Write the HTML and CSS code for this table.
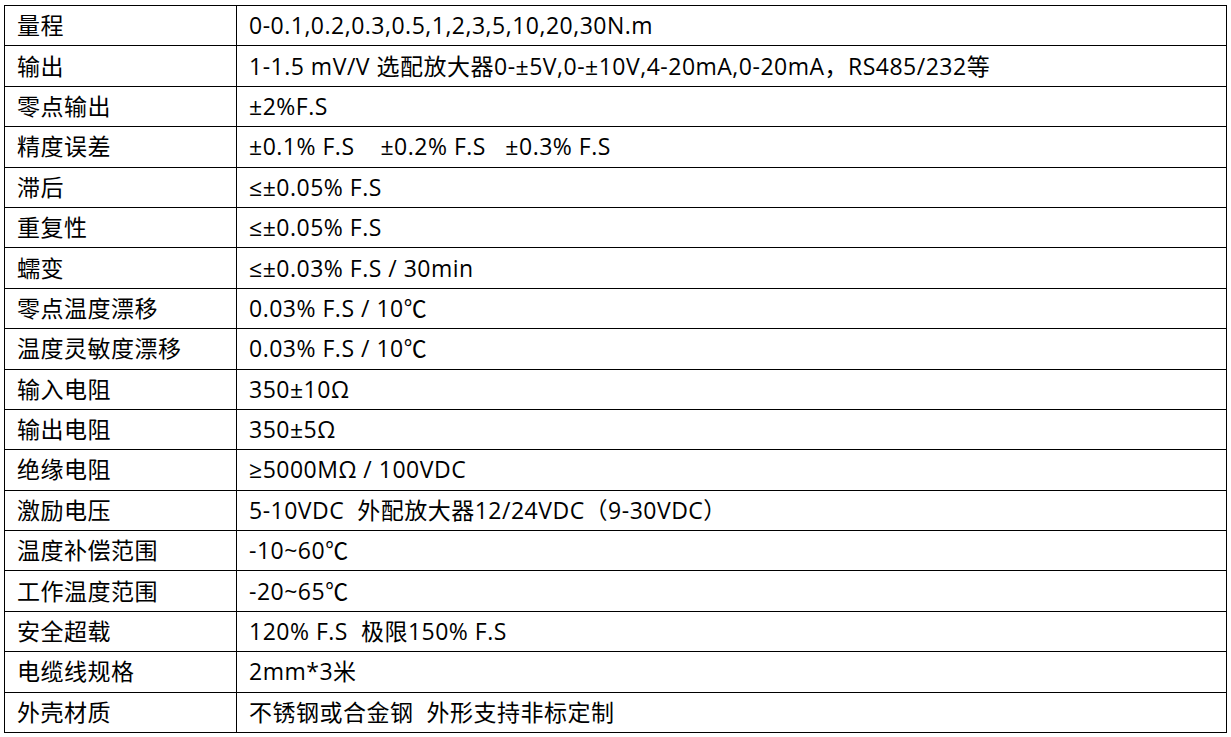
FILE: index.html
```html
<!DOCTYPE html>
<html lang="zh-CN">
<head>
<meta charset="utf-8">
<title>参数表</title>
<link rel="stylesheet" href="styles.css">
</head>
<body>
<table class="spec">
  <colgroup><col class="c-name"><col class="c-val"></colgroup>
  <tbody>
    <tr><td>量程</td><td>0-0.1,0.2,0.3,0.5,1,2,3,5,10,20,30N.m</td></tr>
    <tr><td>输出</td><td>1-1.5 mV/V 选配放大器0-±5V,0-±10V,4-20mA,0-20mA，RS485/232等</td></tr>
    <tr><td>零点输出</td><td>±2%F.S</td></tr>
    <tr><td>精度误差</td><td>±0.1% F.S&nbsp;&nbsp;&nbsp;&nbsp;±0.2% F.S&nbsp;&nbsp;&nbsp;±0.3% F.S</td></tr>
    <tr><td>滞后</td><td>≤±0.05% F.S</td></tr>
    <tr><td>重复性</td><td>≤±0.05% F.S</td></tr>
    <tr><td>蠕变</td><td>≤±0.03% F.S / 30min</td></tr>
    <tr><td>零点温度漂移</td><td>0.03% F.S / 10℃</td></tr>
    <tr><td>温度灵敏度漂移</td><td>0.03% F.S / 10℃</td></tr>
    <tr><td>输入电阻</td><td>350±10Ω</td></tr>
    <tr><td>输出电阻</td><td>350±5Ω</td></tr>
    <tr><td>绝缘电阻</td><td>≥5000MΩ / 100VDC</td></tr>
    <tr><td>激励电压</td><td>5-10VDC&nbsp;&nbsp;外配放大器12/24VDC（9-30VDC）</td></tr>
    <tr><td>温度补偿范围</td><td>-10~60℃</td></tr>
    <tr><td>工作温度范围</td><td>-20~65℃</td></tr>
    <tr><td>安全超载</td><td>120% F.S&nbsp;&nbsp;极限150% F.S</td></tr>
    <tr><td>电缆线规格</td><td>2mm*3米</td></tr>
    <tr><td>外壳材质</td><td>不锈钢或合金钢&nbsp;&nbsp;外形支持非标定制</td></tr>
  </tbody>
</table>
</body>
</html>
```
FILE: styles.css
```css
html, body {
  margin: 0;
  padding: 0;
  background: #ffffff;
}
body {
  padding: 5px 0 0 4px;
  font-family: "Open Sans", "Noto Sans CJK SC", sans-serif;
  color: #000000;
}
.spec {
  border-collapse: collapse;
  width: 1223px;
  table-layout: fixed;
  font-size: 23px;
  letter-spacing: 0.5px;
}
.c-name { width: 232px; }
.spec td {
  border: 1px solid #000000;
  height: 39.4px;
  padding: 0 0 0 12px;
  vertical-align: middle;
  white-space: nowrap;
  line-height: 1;
}
```
